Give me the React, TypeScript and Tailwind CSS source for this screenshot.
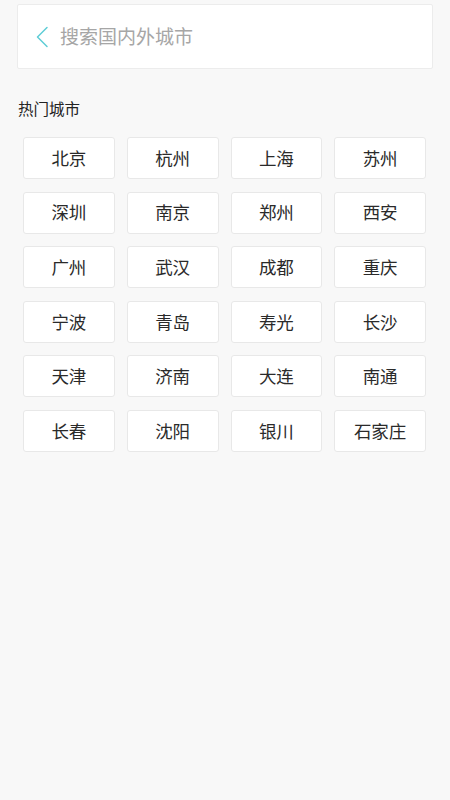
const HOT_CITIES = [
  '北京', '杭州', '上海', '苏州',
  '深圳', '南京', '郑州', '西安',
  '广州', '武汉', '成都', '重庆',
  '宁波', '青岛', '寿光', '长沙',
  '天津', '济南', '大连', '南通',
  '长春', '沈阳', '银川', '石家庄',
];

function BackIcon() {
  return (
    <svg width="14" height="22" viewBox="0 0 14 22" fill="none" aria-hidden="true">
      <path d="M12 1.5 L2.5 11 L12 20.5" stroke="#5fcdd6" strokeWidth="1.5" strokeLinecap="round" strokeLinejoin="round" />
    </svg>
  );
}

export default function App() {
  return (
    <div
      className="min-h-[800px] w-[450px] bg-[#f8f8f8]"
      style={{ fontFamily: '"Noto Sans CJK SC", "Noto Sans", sans-serif' }}
    >
      <div className="px-[17px] pt-[4px]">
        <div className="flex h-[65px] items-center gap-[11px] rounded-[2px] border border-[#ececec] bg-white pl-[17px]">
          <BackIcon />
          <span className="text-[19px] text-[#a6a6a6]">搜索国内外城市</span>
        </div>
      </div>

      <div className="px-[18px] pt-[27px] text-[15.5px] leading-[24px] text-[#222]">热门城市</div>

      <div className="grid grid-cols-4 gap-x-[12px] gap-y-[12.6px] pl-[23px] pr-[24px] pt-[17px]">
        {HOT_CITIES.map((city) => (
          <div
            key={city}
            className="flex h-[42px] items-center justify-center rounded-[3px] border border-[#e8e8e8] bg-white text-[17.5px] text-[#2a2a2a]"
          >
            {city}
          </div>
        ))}
      </div>
    </div>
  );
}
